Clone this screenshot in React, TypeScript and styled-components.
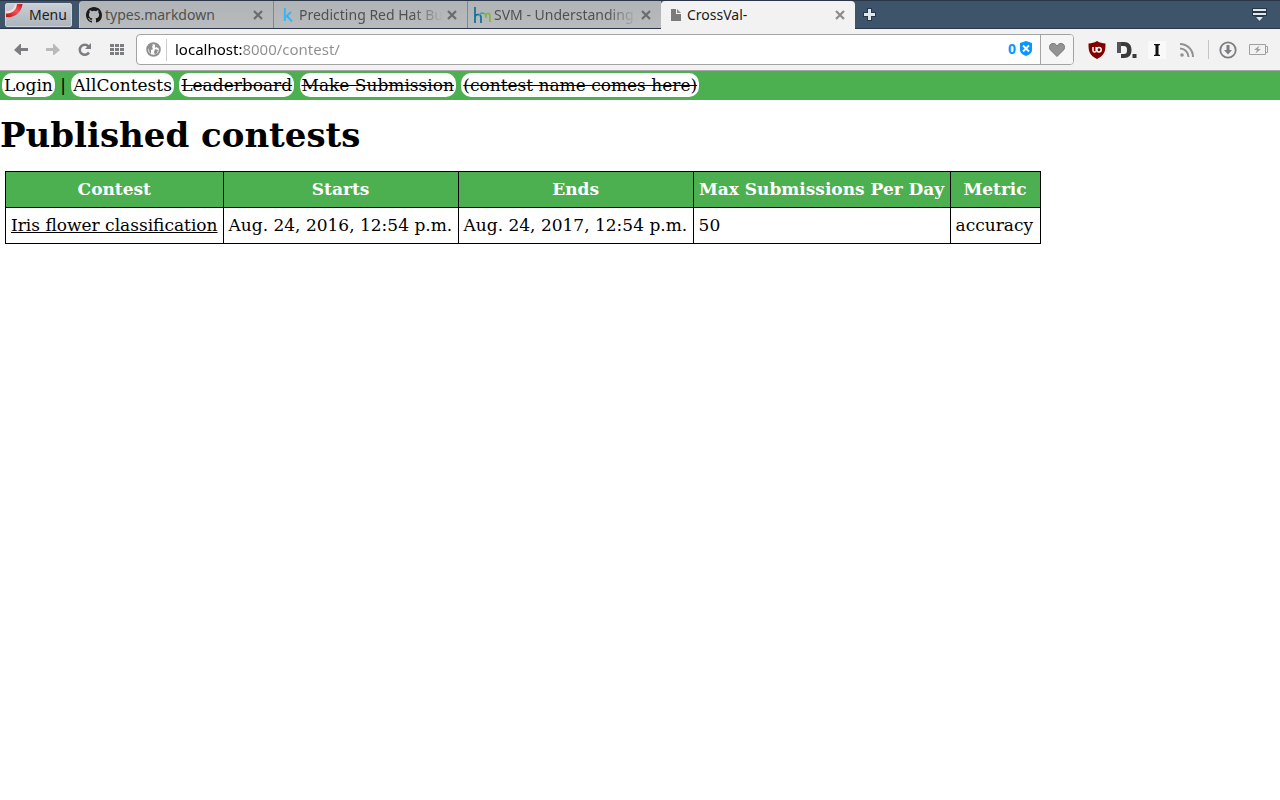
import React from 'react';
import styled, { createGlobalStyle, css } from 'styled-components';

const Global = createGlobalStyle`
  * { box-sizing: border-box; }
  body {
    margin: 0;
    background: #fff;
    color: #000;
    font: 17px/20px "DejaVu Serif", serif;
  }
  button, input { margin: 0; padding: 0; border: 0; background: none; color: inherit; font: inherit; }
  svg { display: block; flex: none; }
`;

const Chrome = styled.header`
  font: 14px/20px "Noto Sans", sans-serif;
`;

const TabBar = styled.div`
  display: flex;
  align-items: flex-end;
  height: 29px;
  padding-left: 5px;
  background: #3d546a;
  border-top: 1px solid #2b3548;
  border-bottom: 1px solid #2b3548;
`;

const MenuButton = styled.button`
  display: flex;
  align-items: center;
  gap: 6px;
  width: 67px;
  height: 24px;
  margin: 0 7px 1px 0;
  border: 1px solid #d0d5db;
  border-radius: 2px;
  background: linear-gradient(#c9ced5, #aeb5bd);
  color: #1c1c1c;
`;

const Tab = styled.div<{ $active?: boolean }>`
  display: flex;
  align-items: center;
  width: 194px;
  height: 27px;
  padding: 0 10px 0 6px;
  border-left: 1px solid #83878c;
  background: linear-gradient(#b0b4b7, #b9bbbe);
  color: #505050;

  &:nth-child(2) { border-left-color: #c4c7ca; border-top-left-radius: 4px; }

  ${(p) => p.$active && css`
    height: 28px;
    margin-bottom: -1px;
    border-left-color: #f2f2f2;
    border-radius: 4px 4px 0 0;
    background: #f2f2f2;
    color: #1a1a1a;
  `}
`;

const TabTitle = styled.span<{ $faded?: boolean }>`
  flex: 1;
  min-width: 0;
  margin: 0 4px 0 3px;
  white-space: nowrap;
  ${(p) => p.$faded && css`mask-image: linear-gradient(to left, transparent, #000 30px);`}
`;

const IconButton = styled.button`
  display: flex;
  align-items: center;
  justify-content: center;
  flex: none;
`;

const NewTab = styled(IconButton)`
  width: 28px;
  height: 27px;
`;

const TabList = styled(IconButton)`
  width: 20px;
  height: 27px;
  margin: 0 11px 0 auto;
`;

const Toolbar = styled.div`
  display: flex;
  align-items: center;
  height: 42px;
  padding: 0 7px 0 5px;
  background: #f2f2f2;
  border-bottom: 1px solid #a4a4a4;
`;

const NavButton = styled(IconButton)`
  width: 32px;
  height: 32px;
`;

const AddressBox = styled.div`
  display: flex;
  align-items: center;
  flex: 1;
  height: 31px;
  margin: 0 8px 0 3px;
  border: 1px solid #a3a3a3;
  border-radius: 4px;
  background: #fff;
  overflow: hidden;
`;

const SiteInfo = styled(IconButton)`
  width: 30px;
  height: 22px;
  padding-left: 3px;
  border-right: 1px solid #ccc;
`;

const Address = styled.input`
  flex: 1;
  min-width: 0;
  height: 29px;
  margin-left: 8px;
  padding-bottom: 2px;
  outline: 0;
  font-size: 15px;
  background: linear-gradient(to right, #000 67px, #8e8e8e 67px);
  background-clip: text;
  -webkit-text-fill-color: transparent;
`;

const Blocked = styled.button`
  display: flex;
  align-items: center;
  gap: 4px;
  margin: 0 8px 2px 0;
  color: #0a96ff;
  font-weight: 700;
`;

const Bookmark = styled(IconButton)`
  width: 33px;
  height: 29px;
  border-left: 1px solid #a3a3a3;
  background: #f6f6f7;
`;

const ExtButton = styled(IconButton)`
  width: 30px;
  height: 30px;
`;

const Divider = styled.span`
  width: 1px;
  height: 19px;
  margin: 0 4px 0 6px;
  background: #c4c4c4;
`;

const PageNav = styled.nav`
  padding: 4px 2px 5px;
  background: #4caf50;
`;

const NavLink = styled.a<{ $struck?: boolean }>`
  padding: 2px;
  border-radius: 10px;
  background: #fff;
  color: #000;
  text-decoration: ${(p) => (p.$struck ? 'line-through' : 'none')};
`;

const Title = styled.h1`
  margin: 15px 0 16px;
  font-size: 34px;
  line-height: 40px;
`;

const Table = styled.table`
  margin: 0 5px;
  border-collapse: collapse;
`;

const cell = css`
  padding: 7px 5px 8px;
  border: 1px solid #000;
`;

const Th = styled.th<{ $width?: number }>`
  ${cell}
  min-width: ${(p) => (p.$width ? `${p.$width}px` : 'auto')};
  background: #4caf50;
  color: #fff;
`;

const Td = styled.td`
  ${cell}
  text-align: left;
  a { color: #000; }
`;

const Close = ({ color = '#6b6b6b' }: { color?: string }) => (
  <IconButton aria-label="Close tab">
    <svg width="10" height="10" viewBox="0 0 10 10" stroke={color} strokeWidth="2.2">
      <path d="M1 1l8 8M9 1l-8 8" />
    </svg>
  </IconButton>
);

const OperaIcon = () => (
  <svg width="17" height="22" viewBox="0 0 17 22">
    <defs>
      <linearGradient id="opera" x1="0" y1="1" x2="1" y2="0">
        <stop offset="0" stopColor="#c00d14" />
        <stop offset=".55" stopColor="#f0545a" />
        <stop offset="1" stopColor="#c8141a" />
      </linearGradient>
    </defs>
    <path d="M0 13C8 14 15.500 9 16.500 0H10C9.500 5 5 9 0 8.500z" fill="url(#opera)" />
    <path d="M0 9.500c6 .5 10.500-3.500 11-9.500H9C8.500 4 5 8 0 7z" fill="#f4dede" />
  </svg>
);

const GithubIcon = () => (
  <svg width="16" height="16" viewBox="0 0 16 16" fill="#1b1b1b">
    <path d="M8 0C3.580 0 0 3.580 0 8c0 3.540 2.290 6.530 5.470 7.590.4.070.55-.17.55-.38 0-.19-.010-.82-.010-1.490-2.010.37-2.530-.49-2.690-.94-.09-.23-.48-.94-.82-1.130-.28-.15-.68-.52-.010-.53.63-.010 1.080.58 1.230.82.72 1.210 1.870.87 2.330.66.070-.52.28-.87.51-1.070-1.780-.2-3.640-.89-3.640-3.950 0-.87.31-1.590.82-2.150-.080-.2-.36-1.020.080-2.120 0 0 .67-.21 2.200.82a7.600 7.600 0 0 1 4 0c1.530-1.040 2.200-.82 2.200-.82.44 1.100.16 1.920.080 2.120.51.56.82 1.270.82 2.150 0 3.070-1.870 3.750-3.650 3.950.29.25.54.73.54 1.480 0 1.070-.010 1.930-.010 2.200 0 .21.15.46.55.38A8.010 8.010 0 0 0 16 8c0-4.420-3.580-8-8-8z" />
  </svg>
);

const KaggleIcon = () => (
  <svg width="16" height="16" viewBox="0 0 16 16" fill="none" stroke="#3ab4f2" strokeWidth="1.900">
    <path d="M4.800 1v13M11 5l-6 5.500M7 9l5 5.500" />
  </svg>
);

const HmIcon = () => (
  <svg width="17" height="16" viewBox="0 0 17 16" fill="none" strokeWidth="1.700">
    <path d="M1 0v16M1 10.500c0-4 6-4 6 0V16" stroke="#0e6f96" />
    <path d="M5 9C6 6 8 5.500 10 6.500" stroke="#4f9aac" />
    <path d="M10 6.500c2 0 2 2 2 4.500M12 9c0-4 4-3 4 0v6" stroke="#82b541" />
  </svg>
);

const FileIcon = () => (
  <svg width="16" height="16" viewBox="0 0 16 16">
    <path d="M3 2h5v5h5v7H3z" fill="#7b7b7b" />
    <path d="M9 2l4 4H9z" fill="#8b8b8b" />
  </svg>
);

const tabs = [
  { title: 'types.markdown', icon: <GithubIcon /> },
  { title: 'Predicting Red Hat Bu', icon: <KaggleIcon />, faded: true },
  { title: 'SVM - Understanding', icon: <HmIcon />, faded: true },
  { title: 'CrossVal-', icon: <FileIcon />, active: true },
];

const Arrow = ({ flip, color }: { flip?: boolean; color: string }) => (
  <svg width="14" height="12" viewBox="0 0 14 12" fill={color}>
    <path d={flip ? 'M14 6L8 0H7v4H0v3h7v4h1z' : 'M0 6l6-6h1v4h7v3H7v4H6z'} />
  </svg>
);

const navLinks = ['Leaderboard', 'Make Submission', '(contest name comes here)'];

export default function App() {
  return (
    <>
      <Global />
      <Chrome>
        <TabBar>
          <MenuButton><OperaIcon />Menu</MenuButton>
          {tabs.map((t) => (
            <Tab key={t.title} $active={t.active}>
              {t.icon}
              <TabTitle $faded={t.faded}>{t.title}</TabTitle>
              <Close color={t.active ? '#8c8c8c' : undefined} />
            </Tab>
          ))}
          <NewTab aria-label="New tab">
            <svg width="13" height="13" viewBox="0 0 13 13">
              <path d="M6.500 0v13M0 6.500h13" stroke="#26374a" strokeWidth="5" />
              <path d="M6.500 1v11M1 6.500h11" stroke="#dfe7e9" strokeWidth="3" />
            </svg>
          </NewTab>
          <TabList aria-label="Tab list">
            <svg width="15" height="14" viewBox="0 0 15 14">
              <path d="M0 0h15v8h-3l-4.500 5.500L3 8H0z" fill="#26374a" />
              <path d="M1 1h13v2H1zM1 5h13v2H1zM4 9h7l-3.500 4z" fill="#dfe7e9" />
            </svg>
          </TabList>
        </TabBar>
        <Toolbar>
          <NavButton aria-label="Back"><Arrow color="#7b7d80" /></NavButton>
          <NavButton aria-label="Forward"><Arrow flip color="#b9b9b9" /></NavButton>
          <NavButton aria-label="Reload">
            <svg width="14" height="14" viewBox="0 0 14 14">
              <path d="M11 9.500A5 5 0 1 1 10.500 3.500" fill="none" stroke="#7b7d80" strokeWidth="2.500" />
              <path d="M13 0v6H7z" fill="#7b7d80" />
            </svg>
          </NavButton>
          <NavButton aria-label="Speed dial">
            <svg width="14" height="11" viewBox="0 0 14 11" fill="#7b7d80">
              {[0, 4, 8].map((y) => [0, 5, 10].map((x) => (
                <rect key={`${x}-${y}`} x={x} y={y} width="4" height="3" />
              )))}
            </svg>
          </NavButton>
          <AddressBox>
            <SiteInfo aria-label="Site information">
              <svg width="15" height="15" viewBox="0 0 15 15">
                <circle cx="7.500" cy="7.500" r="6.300" fill="#fff" stroke="#8f8f8f" strokeWidth="2" />
                <path d="M2 4l3-2 2 1-1 2 1 2-2 1v3l-1 1-1-4-1-2zM9 2l4 3-1 1-2-1-1 1zM9 7l3 1-1 3-2 2-1-3z" fill="#8f8f8f" />
              </svg>
            </SiteInfo>
            <Address aria-label="Address" defaultValue="localhost:8000/contest/" />
            <Blocked aria-label="Blocked content: 0">
              0
              <svg width="12" height="15" viewBox="0 0 12 15">
                <path d="M0 2l6-2 6 2v7c0 3-3 5-6 6-3-1-6-3-6-6z" fill="#0a96ff" />
                <path d="M3 4.500l6 6M9 4.500l-6 6" stroke="#fff" strokeWidth="1.800" />
              </svg>
            </Blocked>
            <Bookmark aria-label="Bookmark">
              <svg width="16" height="14" viewBox="0 0 16 14">
                <path d="M8 13.500L1.500 7C-1 4 1 .5 4 .5c2 0 3 .8 4 2.500C9 1.300 10 .5 12 .5c3 0 5 3.500 2.500 6.500z" fill="#939393" stroke="#777" />
              </svg>
            </Bookmark>
          </AddressBox>
          <ExtButton aria-label="uBlock Origin">
            <svg width="18" height="18" viewBox="0 0 18 18">
              <path d="M9 0c3 2 5 2 8.500 2.500C17.500 10 17 14 9 18 1 14 .5 10 .5 2.500 4 2 6 2 9 0z" fill="#800000" />
              <path d="M5 6v3.500a1.600 1.600 0 0 0 3.200 0V6" fill="none" stroke="#fff" strokeWidth="1.500" />
              <circle cx="11" cy="8.800" r="2.200" fill="none" stroke="#fff" strokeWidth="1.500" />
            </svg>
          </ExtButton>
          <ExtButton aria-label="Disconnect">
            <svg width="20" height="16" viewBox="0 0 20 16" fill="#3a3a3a">
              <path d="M0 0h4v11H0z" fill="#555" />
              <path d="M4 0h3c5 0 7.500 3 7.500 8S12 16 7 16H4v-4h3c2 0 3-1 3-4S9 4 7 4H4z" />
              <rect x="15.500" y="12" width="4" height="4" />
            </svg>
          </ExtButton>
          <ExtButton aria-label="Instapaper">
            <svg width="18" height="18" viewBox="0 0 18 18">
              <rect width="18" height="18" fill="#f9f9f9" />
              <path d="M6 3h6v1l-1.500.5v9l1.500.5v1H6v-1l1.500-.5v-9L6 4z" fill="#111" />
            </svg>
          </ExtButton>
          <ExtButton aria-label="Feeds">
            <svg width="14" height="14" viewBox="0 0 14 14" fill="none" stroke="#929292" strokeWidth="2">
              <path d="M0 1a13 13 0 0 1 13 13M0 5.500a8.500 8.500 0 0 1 8.500 8.500" />
              <circle cx="2" cy="12" r="1.800" fill="#929292" stroke="none" />
            </svg>
          </ExtButton>
          <Divider />
          <ExtButton aria-label="Downloads">
            <svg width="18" height="18" viewBox="0 0 18 18">
              <circle cx="9" cy="9" r="7.700" fill="none" stroke="#7b7d80" strokeWidth="1.800" />
              <path d="M7.500 4h3v5H13l-4 4.500L5 9h2.500z" fill="#7b7d80" />
            </svg>
          </ExtButton>
          <ExtButton aria-label="Battery saver">
            <svg width="19" height="11" viewBox="0 0 19 11">
              <path d="M.5.5h16v10H.5zM17 2.500h1.500v6H17" fill="none" stroke="#a0a0a0" />
              <path d="M10.500 1.500L5 6h3l-1.500 3.500L12 5H9z" fill="#a0a0a0" />
            </svg>
          </ExtButton>
        </Toolbar>
      </Chrome>
      <PageNav>
        <NavLink href="#login">Login</NavLink>{' | '}
        <NavLink href="#contests">AllContests</NavLink>
        {navLinks.map((label) => (
          <React.Fragment key={label}>
            {' '}<NavLink href="#contest" $struck>{label}</NavLink>
          </React.Fragment>
        ))}
      </PageNav>
      <main>
        <Title>Published contests</Title>
        <Table>
          <thead>
            <tr>
              <Th>Contest</Th>
              <Th $width={235}>Starts</Th>
              <Th $width={235}>Ends</Th>
              <Th $width={257}>Max Submissions Per Day</Th>
              <Th $width={90}>Metric</Th>
            </tr>
          </thead>
          <tbody>
            <tr>
              <Td><a href="#iris">Iris flower classification</a></Td>
              <Td>Aug. 24, 2016, 12:54 p.m.</Td>
              <Td>Aug. 24, 2017, 12:54 p.m.</Td>
              <Td>50</Td>
              <Td>accuracy</Td>
            </tr>
          </tbody>
        </Table>
      </main>
    </>
  );
}
